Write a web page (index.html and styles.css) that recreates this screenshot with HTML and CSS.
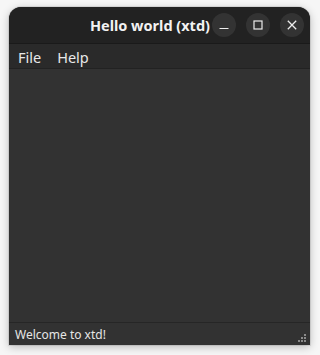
FILE: index.html
```html
<!DOCTYPE html>
<html>
<head>
<meta charset="utf-8">
<link rel="stylesheet" href="styles.css">
</head>
<body>
<div class="window">
  <div class="titlebar">
    <div class="title">Hello world (xtd)</div>
    <div class="buttons">
      <div class="btn"><svg width="10" height="10" viewBox="0 0 10 10"><path d="M0.5 8.5h9" stroke="#ececec" stroke-width="1.2"/></svg></div>
      <div class="btn"><svg width="10" height="10" viewBox="0 0 10 10"><rect x="1" y="1" width="8" height="8" fill="none" stroke="#ececec" stroke-width="1.2"/></svg></div>
      <div class="btn"><svg width="10" height="10" viewBox="0 0 10 10"><path d="M0.8 0.8L9.2 9.2M9.2 0.8L0.8 9.2" stroke="#ececec" stroke-width="1.3"/></svg></div>
    </div>
  </div>
  <div class="menubar">
    <span class="menuitem">File</span>
    <span class="menuitem">Help</span>
  </div>
  <div class="content"></div>
  <div class="statusbar">
    <span class="status">Welcome to xtd!</span>
    <svg class="grip" width="9" height="9" viewBox="0 0 9 9">
      <rect x="6" y="0" width="2" height="2" fill="#8a8a8a"/>
      <rect x="3" y="3" width="2" height="2" fill="#8a8a8a"/>
      <rect x="6" y="3" width="2" height="2" fill="#8a8a8a"/>
      <rect x="0" y="6" width="2" height="2" fill="#8a8a8a"/>
      <rect x="3" y="6" width="2" height="2" fill="#8a8a8a"/>
      <rect x="6" y="6" width="2" height="2" fill="#8a8a8a"/>
    </svg>
  </div>
</div>
</body>
</html>
```
FILE: styles.css
```css
html, body {
  margin: 0;
  padding: 0;
  background: #f6f6f6;
}
body {
  padding: 7px 10px 10px 9px;
  font-family: "Noto Sans", "Open Sans", sans-serif;
}
.window {
  width: 301px;
  height: 338px;
  display: flex;
  flex-direction: column;
  border-radius: 12px 12px 0 0;
  overflow: hidden;
  background: #323232;
  box-shadow: 0 2px 8px rgba(0,0,0,0.25), 0 0 0 1px rgba(0,0,0,0.08);
}
.titlebar {
  height: 37px;
  flex: none;
  background: #222222;
  display: flex;
  align-items: center;
  justify-content: flex-end;
  border-bottom: 1px solid #1a1a1a;
  box-sizing: border-box;
}
.title {
  color: #f2f2f2;
  font-weight: bold;
  font-size: 14.5px;
  margin-right: 2px;
}
.buttons {
  display: flex;
  gap: 10px;
  padding-right: 6px;
}
.btn {
  width: 24px;
  height: 24px;
  border-radius: 50%;
  background: #333333;
  display: flex;
  align-items: center;
  justify-content: center;
}
.menubar {
  height: 25px;
  flex: none;
  background: #2a2a2a;
  border-bottom: 1px solid #222;
  box-sizing: border-box;
  display: flex;
  align-items: center;
  padding: 2px 0 0 9px;
  gap: 16px;
}
.menuitem {
  color: #e8e8e8;
  font-size: 14.5px;
}
.content {
  flex: 1;
  background: #323232;
}
.statusbar {
  height: 23px;
  flex: none;
  background: #323232;
  border-top: 1px solid #262626;
  box-sizing: border-box;
  display: flex;
  align-items: center;
  justify-content: space-between;
  padding: 0 3px 0 6px;
}
.status {
  color: #e6e6e6;
  font-size: 12px;
}
.grip {
  align-self: flex-end;
  margin-bottom: 2px;
}
```
